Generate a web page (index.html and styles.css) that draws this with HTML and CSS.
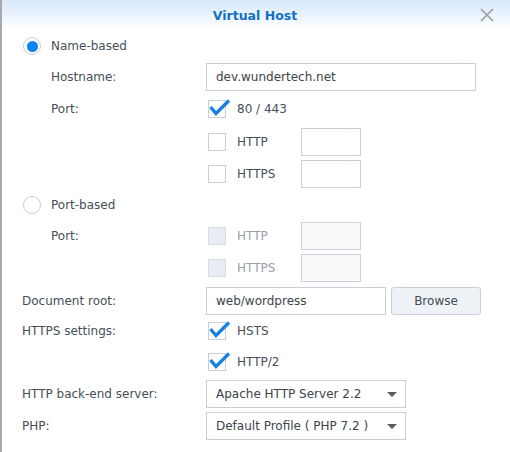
FILE: index.html
```html
<!DOCTYPE html>
<html>
<head>
<meta charset="utf-8">
<link rel="stylesheet" href="styles.css">
</head>
<body>
<div class="dialog">
  <div class="header">
    <span class="title">Virtual Host</span>
    <svg class="close" width="14" height="14" viewBox="0 0 14 14"><path d="M1 1 L13 13 M13 1 L1 13" stroke="#9a9da1" stroke-width="1.6" fill="none"/></svg>
  </div>
  <div class="body">
    <div class="row r-name">
      <span class="radio checked"></span><span class="radio-label">Name-based</span>
    </div>
    <div class="row r-host">
      <span class="label sub">Hostname:</span>
      <span class="input w-host">dev.wundertech.net</span>
    </div>
    <div class="row r-port">
      <span class="label sub">Port:</span>
      <span class="check-item"><span class="cb checked"><svg viewBox="0 0 22 18" width="22" height="18"><path d="M1.5 8 L7 14.5 L20 1.5" stroke="#1782df" stroke-width="3.4" fill="none"/></svg></span><span class="cb-label">80 / 443</span></span>
    </div>
    <div class="row r-http">
      <span class="label sub"></span>
      <span class="check-item fixed"><span class="cb"></span><span class="cb-label">HTTP</span></span>
      <span class="input small"></span>
    </div>
    <div class="row r-https">
      <span class="label sub"></span>
      <span class="check-item fixed"><span class="cb"></span><span class="cb-label">HTTPS</span></span>
      <span class="input small"></span>
    </div>
    <div class="row r-portbased">
      <span class="radio"></span><span class="radio-label">Port-based</span>
    </div>
    <div class="row r-p2">
      <span class="label sub">Port:</span>
      <span class="check-item fixed disabled"><span class="cb"></span><span class="cb-label">HTTP</span></span>
      <span class="input small disabled"></span>
    </div>
    <div class="row r-p3">
      <span class="label sub"></span>
      <span class="check-item fixed disabled"><span class="cb"></span><span class="cb-label">HTTPS</span></span>
      <span class="input small disabled"></span>
    </div>
    <div class="row r-doc">
      <span class="label">Document root:</span>
      <span class="input w-doc">web/wordpress</span>
      <span class="button">Browse</span>
    </div>
    <div class="row r-hsts">
      <span class="label">HTTPS settings:</span>
      <span class="check-item"><span class="cb checked"><svg viewBox="0 0 22 18" width="22" height="18"><path d="M1.5 8 L7 14.5 L20 1.5" stroke="#1782df" stroke-width="3.4" fill="none"/></svg></span><span class="cb-label">HSTS</span></span>
    </div>
    <div class="row r-h2">
      <span class="label"></span>
      <span class="check-item"><span class="cb checked"><svg viewBox="0 0 22 18" width="22" height="18"><path d="M1.5 8 L7 14.5 L20 1.5" stroke="#1782df" stroke-width="3.4" fill="none"/></svg></span><span class="cb-label">HTTP/2</span></span>
    </div>
    <div class="row r-backend">
      <span class="label">HTTP back-end server:</span>
      <span class="select">Apache HTTP Server 2.2<span class="arrow"></span></span>
    </div>
    <div class="row r-php">
      <span class="label">PHP:</span>
      <span class="select">Default Profile ( PHP 7.2 )<span class="arrow"></span></span>
    </div>
  </div>
</div>
</body>
</html>
```

FILE: styles.css
```css
* { box-sizing: border-box; }
html, body { margin: 0; padding: 0; background: #ffffff; }
body {
  font-family: "DejaVu Sans", Verdana, sans-serif;
  font-size: 12px;
  color: #464f58;
}
.dialog {
  width: 510px;
  height: 452px;
  background: #ffffff;
  border-left: 2px solid #a7a9ac;
  position: relative;
  overflow: hidden;
}
.header {
  height: 30px;
  background: linear-gradient(#d6e8fb, #ffffff);
  display: flex;
  align-items: center;
  justify-content: center;
  position: relative;
}
.title {
  font-weight: bold;
  font-size: 12.5px;
  color: #1070c4;
  margin-left: -2px;
}
.close {
  position: absolute;
  right: 16px;
  top: 8px;
}
.body {
  padding: 2px 0 0 20px;
}
.row {
  display: flex;
  align-items: center;
  height: 28px;
  margin-bottom: 4px;
}
.r-name { margin-bottom: 3px; }
.r-port { height: 27px; margin-bottom: 6px; }
.r-https { margin-bottom: 3px; }
.r-portbased { margin-bottom: 3px; }
.r-p3 { margin-bottom: 5px; }
.r-doc { margin-bottom: 2px; }
.r-hsts { height: 27px; margin-bottom: 4px; }
.r-h2 { height: 27px; margin-bottom: 5px; }

.label {
  width: 184px;
  flex: none;
  white-space: nowrap;
}
.label.sub { padding-left: 29px; }

.radio {
  width: 18px;
  height: 18px;
  border: 1px solid #c9cdd2;
  border-radius: 50%;
  margin-left: 1px;
  background: #fff;
  display: flex;
  align-items: center;
  justify-content: center;
  flex: none;
}
.radio.checked::after {
  content: "";
  width: 11px;
  height: 11px;
  border-radius: 50%;
  background: #0a84f0;
}
.radio-label { margin-left: 10px; }

.input {
  height: 28px;
  border: 1px solid #c8cfd7;
  background: #fff;
  padding-left: 9px;
  display: flex;
  align-items: center;
  color: #3d444b;
  flex: none;
}
.w-host { width: 270px; }
.w-doc { width: 180px; }
.input.small { width: 60px; }
.input.disabled { background: #f7f9fb; border-color: #cdd3da; }

.check-item {
  display: flex;
  align-items: center;
  margin-left: 2px;
  flex: none;
}
.check-item.fixed { width: 93px; }
.cb {
  width: 18px;
  height: 18px;
  border: 1px solid #c9ced4;
  background: #fff;
  position: relative;
  flex: none;
}
.cb svg {
  position: absolute;
  left: 0px;
  top: -2px;
}
.cb-label { margin-left: 11px; }
.disabled .cb { background: #e8edf3; border-color: #d6dce3; }
.disabled .cb-label { color: #98a0a9; }

.button {
  width: 90px;
  height: 28px;
  margin-left: 5px;
  border: 1px solid #c7d0da;
  border-radius: 3px;
  background: #eef2f7;
  display: flex;
  align-items: center;
  justify-content: center;
  color: #434b53;
}

.select {
  width: 200px;
  height: 28px;
  border: 1px solid #c8cfd7;
  padding-left: 9px;
  display: flex;
  align-items: center;
  position: relative;
  color: #3d444b;
  flex: none;
}
.arrow {
  position: absolute;
  right: 8px;
  top: 11px;
  width: 0;
  height: 0;
  border-left: 5px solid transparent;
  border-right: 5px solid transparent;
  border-top: 5px solid #555b61;
}
```
